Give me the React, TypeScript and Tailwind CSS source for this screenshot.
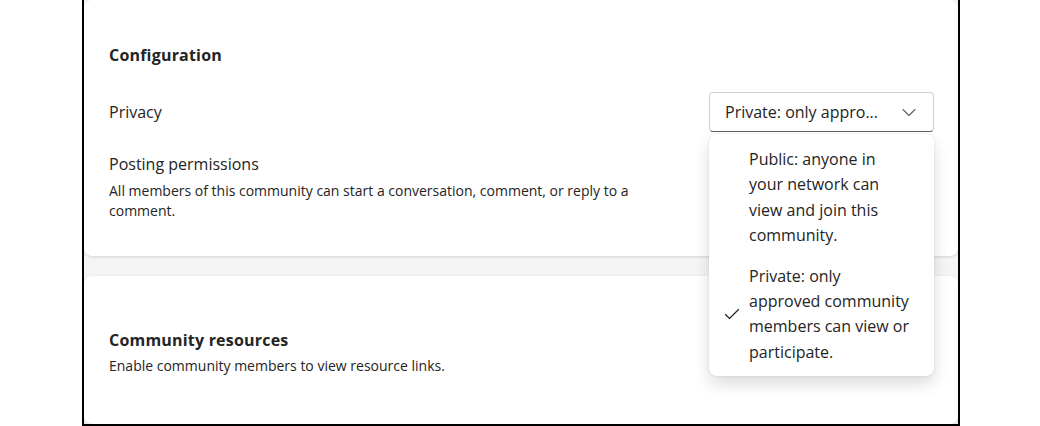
import React from 'react';

const font = { fontFamily: '"Open Sans", "Noto Sans", sans-serif' };

function Chevron() {
  return (
    <svg width="16" height="16" viewBox="0 0 16 16" fill="none" className="text-[#616161]">
      <path d="M2 5.5 8 11.5l6-6" stroke="currentColor" strokeWidth="1.1" strokeLinecap="round" strokeLinejoin="round" />
    </svg>
  );
}

function Check() {
  return (
    <svg width="16" height="16" viewBox="0 0 16 16" fill="none" className="text-[#242424]">
      <path d="M1.5 8.5 5.5 12.5 14.5 3.5" stroke="currentColor" strokeWidth="1.2" strokeLinecap="round" strokeLinejoin="round" />
    </svg>
  );
}

export default function App() {
  return (
    <div className="w-[1040px] h-[426px] bg-white" style={font}>
      <div className="ml-[82px] w-[878px] h-[426px] border-x-2 border-b-2 border-black bg-[#f5f5f5] flex flex-col gap-[20px] overflow-hidden">
        {/* Configuration card */}
        <div className="relative bg-white rounded-lg shadow-[0_1px_3px_rgba(0,0,0,0.14)] h-[256px] pl-[25px] pr-[24px] pt-[44px] text-[#242424]">
          <h2 className="text-[16px] leading-[22px] font-bold tracking-[0.2px]">Configuration</h2>
          <div className="mt-[26px] flex items-center justify-between">
            <span className="text-[16px] leading-[22px]">Privacy</span>
            <button className="w-[225px] h-[40px] flex items-center justify-between pl-[15px] pr-[16px] rounded border border-[#d1d1d1] border-b-[#616161] bg-white text-[16px] text-[#242424]">
              <span>Private: only appro...</span>
              <Chevron />
            </button>
          </div>
          <div className="mt-[21px]">
            <div className="text-[16px] leading-[22px]">Posting permissions</div>
            <p className="mt-[6px] w-[550px] text-[14px] leading-[20px]">
              All members of this community can start a conversation, comment, or reply to a comment.
            </p>
          </div>

          {/* Open privacy menu */}
          <div className="absolute z-10 right-[24px] top-[134px] w-[225px] bg-white rounded-lg shadow-[0_8px_16px_rgba(0,0,0,0.14),0_0_2px_rgba(0,0,0,0.12)] pt-[13px] pb-[11px] text-[16px] leading-[25.4px] text-[#242424] whitespace-nowrap">
            <div className="pl-[40px] pr-[10px]">
              Public: anyone in
              <br />
              your network can
              <br />
              view and join this
              <br />
              community.
            </div>
            <div className="relative mt-[15px] pl-[40px] pr-[10px]">
              <span className="absolute left-[15px] top-1/2 -translate-y-1/2">
                <Check />
              </span>
              Private: only
              <br />
              approved community
              <br />
              members can view or
              <br />
              participate.
            </div>
          </div>
        </div>

        {/* Community resources card */}
        <div className="bg-white rounded-lg shadow-[0_1px_3px_rgba(0,0,0,0.14)] flex-1 pl-[25px] pt-[53px] text-[#242424]">
          <h2 className="text-[16px] leading-[22px] font-bold tracking-[0.2px]">Community resources</h2>
          <p className="mt-[5px] text-[14px] leading-[20px]">Enable community members to view resource links.</p>
        </div>
      </div>
    </div>
  );
}
